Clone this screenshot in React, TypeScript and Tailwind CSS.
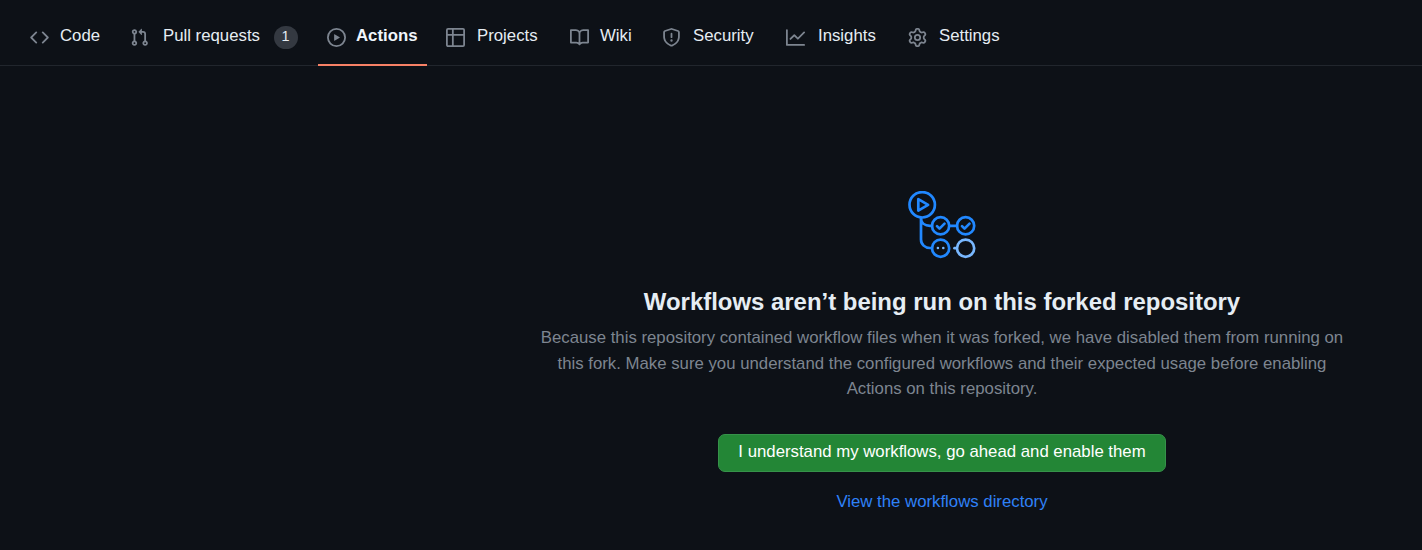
type Tab = { label: string; d: string; item: string; gap: string; badge?: string; active?: boolean };

const tabs: Tab[] = [
  {
    label: 'Code',
    item: 'w-[100px]',
    gap: 'ml-[11px]',
    d: 'M4.72 3.22a.75.75 0 011.06 1.06L2.06 8l3.72 3.72a.75.75 0 11-1.06 1.06L.47 8.53a.75.75 0 010-1.06l4.25-4.25zm6.56 0a.75.75 0 10-1.06 1.06L13.94 8l-3.72 3.72a.75.75 0 101.06 1.06l4.25-4.25a.75.75 0 000-1.06l-4.25-4.25z',
  },
  {
    label: 'Pull requests',
    item: 'w-[197px]',
    gap: 'ml-[14px]',
    badge: '1',
    d: 'M7.177 3.073L9.573.677A.25.25 0 0110 .854v4.792a.25.25 0 01-.427.177L7.177 3.427a.25.25 0 010-.354zM3.75 2.5a.75.75 0 100 1.5.75.75 0 000-1.5zm-2.25.75a2.25 2.25 0 113 2.122v5.256a2.251 2.251 0 11-1.5 0V5.372A2.25 2.25 0 011.5 3.25zM11 2.5h-1V4h1a1 1 0 011 1v5.628a2.251 2.251 0 101.5 0V5A2.5 2.5 0 0011 2.5zm1 10.25a.75.75 0 111.5 0 .75.75 0 01-1.5 0zM3.75 12a.75.75 0 100 1.5.75.75 0 000-1.5z',
  },
  {
    label: 'Actions',
    item: 'w-[119px]',
    gap: 'ml-[10px]',
    active: true,
    d: 'M1.5 8a6.5 6.5 0 1113 0 6.5 6.5 0 01-13 0zM8 0a8 8 0 100 16A8 8 0 008 0zM6.379 5.227A.25.25 0 006 5.442v5.117a.25.25 0 00.379.214l4.264-2.559a.25.25 0 000-.428L6.379 5.227z',
  },
  {
    label: 'Projects',
    item: 'w-[124px]',
    gap: 'ml-[12px]',
    d: 'M1.75 0A1.75 1.75 0 000 1.75v12.5C0 15.216.784 16 1.75 16h12.5A1.75 1.75 0 0016 14.25V1.75A1.75 1.75 0 0014.25 0H1.75zM1.5 1.75a.25.25 0 01.25-.25H5v3.5H1.5V1.75zM6.5 6.5v8h7.75a.25.25 0 00.25-.25V6.5h-8zm8-1.5V1.75a.25.25 0 00-.25-.25H6.5V5h8zm-13 1.5v7.75c0 .138.112.25.25.25H5v-8H1.5z',
  },
  {
    label: 'Wiki',
    item: 'w-[92px]',
    gap: 'ml-[11px]',
    d: 'M0 1.75A.75.75 0 01.75 1h4.253c1.227 0 2.317.59 3 1.501A3.744 3.744 0 0111.006 1h4.245a.75.75 0 01.75.75v10.5a.75.75 0 01-.75.75h-4.507a2.25 2.25 0 00-1.591.659l-.622.621a.75.75 0 01-1.06 0l-.622-.621A2.25 2.25 0 005.258 13H.75a.75.75 0 01-.75-.75V1.75zm8.755 3a2.25 2.25 0 012.25-2.25H14.5v9h-3.757c-.71 0-1.4.201-1.992.572l.004-7.322zm-1.504 7.324l.004-5.073-.002-2.253A2.25 2.25 0 005.003 2.5H1.5v9h3.757a3.75 3.75 0 011.994.574z',
  },
  {
    label: 'Security',
    item: 'w-[124px]',
    gap: 'ml-[12px]',
    d: 'M7.467.133a1.75 1.75 0 011.066 0l5.25 1.68A1.75 1.75 0 0115 3.48V7c0 1.566-.32 3.182-1.303 4.682-.983 1.498-2.585 2.813-5.032 3.855a1.7 1.7 0 01-1.33 0c-2.447-1.042-4.049-2.357-5.032-3.855C1.32 10.182 1 8.566 1 7V3.48a1.75 1.75 0 011.217-1.667l5.25-1.68zm.61 1.429a.25.25 0 00-.153 0l-5.25 1.68a.25.25 0 00-.174.238V7c0 1.358.275 2.666 1.057 3.86.784 1.194 2.121 2.34 4.366 3.297a.2.2 0 00.154 0c2.245-.956 3.582-2.104 4.366-3.298C13.225 9.666 13.5 8.36 13.5 7V3.48a.25.25 0 00-.174-.237l-5.25-1.68zM9 10.5a1 1 0 11-2 0 1 1 0 012 0zm-.25-5.75a.75.75 0 10-1.5 0v3a.75.75 0 001.5 0v-3z',
  },
  {
    label: 'Insights',
    item: 'w-[122px]',
    gap: 'ml-[13px]',
    d: 'M1.5 1.75a.75.75 0 00-1.5 0v12.5c0 .414.336.75.75.75h14.5a.75.75 0 000-1.5H1.5V1.75zm14.28 2.53a.75.75 0 00-1.06-1.06L10 7.94 7.53 5.47a.75.75 0 00-1.06 0L3.22 8.72a.75.75 0 001.06 1.06L7 7.06l2.47 2.47a.75.75 0 001.06 0l5.25-5.25z',
  },
  {
    label: 'Settings',
    item: 'w-[110px]',
    gap: 'ml-[12px]',
    d: 'M7.429 1.525a6.593 6.593 0 011.142 0c.036.003.108.036.137.146l.289 1.105c.147.56.55.967.997 1.189.174.086.341.183.501.29.417.278.97.423 1.53.27l1.102-.303c.11-.03.175.016.195.046.219.31.41.641.573.989.014.031.022.11-.059.19l-.815.806c-.411.406-.562.957-.53 1.456a4.588 4.588 0 010 .582c-.032.499.119 1.05.53 1.456l.815.806c.08.08.073.159.059.19a6.494 6.494 0 01-.573.99c-.02.029-.086.074-.195.045l-1.103-.303c-.559-.153-1.112-.008-1.529.27-.16.107-.327.204-.5.29-.449.222-.851.628-.998 1.189l-.289 1.105c-.029.11-.101.143-.137.146a6.613 6.613 0 01-1.142 0c-.036-.003-.108-.037-.137-.146l-.289-1.105c-.147-.56-.55-.967-.997-1.189a4.502 4.502 0 01-.501-.29c-.417-.278-.97-.423-1.53-.27l-1.102.303c-.11.03-.175-.016-.195-.046a6.492 6.492 0 01-.573-.989c-.014-.031-.022-.11.059-.19l.815-.806c.411-.406.562-.957.53-1.456a4.587 4.587 0 010-.582c.032-.499-.119-1.05-.53-1.456l-.815-.806c-.08-.08-.073-.159-.059-.19a6.44 6.44 0 01.573-.99c.02-.029.086-.075.195-.045l1.103.303c.559.153 1.112.008 1.529-.27.16-.107.327-.204.5-.29.449-.222.851-.628.998-1.189l.289-1.105c.029-.11.101-.143.137-.146zM8 0c-.236 0-.47.01-.701.03-.743.065-1.29.615-1.458 1.261l-.29 1.106c-.017.066-.078.158-.211.224a5.994 5.994 0 00-.668.386c-.123.082-.233.09-.3.071L3.27 2.776c-.644-.177-1.392.02-1.82.63a7.977 7.977 0 00-.704 1.217c-.315.675-.111 1.422.363 1.891l.815.806c.05.048.098.147.088.294a6.084 6.084 0 000 .772c.01.147-.038.246-.088.294l-.815.806c-.474.469-.678 1.216-.363 1.891.2.428.436.835.704 1.218.428.609 1.176.806 1.82.63l1.103-.303c.066-.019.176-.011.299.071.213.143.436.272.668.386.133.066.194.158.212.224l.289 1.106c.169.646.715 1.196 1.458 1.26a8.094 8.094 0 001.402 0c.743-.064 1.29-.614 1.458-1.26l.29-1.106c.017-.066.078-.158.211-.224a5.98 5.98 0 00.668-.386c.123-.082.233-.09.3-.071l1.102.302c.644.177 1.392-.02 1.82-.63.268-.382.505-.789.704-1.217.315-.675.111-1.422-.364-1.891l-.814-.806c-.05-.048-.098-.147-.088-.294a6.1 6.1 0 000-.772c-.01-.147.039-.246.088-.294l.814-.806c.475-.469.679-1.216.364-1.891a7.992 7.992 0 00-.704-1.218c-.428-.609-1.176-.806-1.82-.63l-1.103.303c-.066.019-.176.011-.299-.071a5.991 5.991 0 00-.668-.386c-.133-.066-.194-.158-.212-.224L10.16 1.29C9.99.645 9.444.095 8.701.031A8.094 8.094 0 008 0zM8 5a3 3 0 100 6 3 3 0 000-6zm0 1.5a1.5 1.5 0 110 3 1.5 1.5 0 010-3z',
  },
];

function TabLink({ tab }: { tab: Tab }) {
  return (
    <a className={`relative flex h-full shrink-0 items-start whitespace-nowrap ${tab.item}`}>
      <svg viewBox="0 0 16 16" className="mt-[28px] h-[19px] w-[19px] shrink-0 fill-[#7d8590]">
        <path fillRule="evenodd" d={tab.d} />
      </svg>
      <span className={`mt-[23px] leading-[25px] ${tab.gap} ${tab.active ? 'font-bold text-[#f0f6fc]' : ''}`}>
        {tab.label}
      </span>
      {tab.badge && (
        <span className="mt-[26px] ml-[14px] h-[23px] w-6 rounded-full bg-[#343941] pr-px text-center text-[14.4px] leading-[21px]">
          {tab.badge}
        </span>
      )}
      {tab.active && <span className="absolute -bottom-px -left-[9px] h-0.5 w-[109px] bg-[#f78166]" />}
    </a>
  );
}

function WorkflowArt() {
  return (
    <svg viewBox="0 0 68 68" className="h-[68px] w-[68px]" fill="none" stroke="#2188ff" strokeWidth="2.7" strokeLinecap="round" strokeLinejoin="round">
      <circle cx="14.2" cy="13.8" r="12.7" />
      <path d="M10.3 8.2v11.4l9.8-5.700z" />
      <path d="M13 27v21.500c0 5 4 8.500 9 8.500h2M13 27c0 5 4 7.800 9 7.800h2M42 34.800h7" />
      <circle cx="32.600" cy="34.800" r="8.600" />
      <circle cx="57.600" cy="34.800" r="8.600" />
      <path d="M29 35.100l2.500 2.500 5-5M54 35.100l2.500 2.500 5-5" />
      <circle cx="32.600" cy="57.200" r="8.600" />
      <g stroke="#79b8ff">
        <circle cx="57.600" cy="57.200" r="8.600" />
        <path d="M46.500 57.200h2" />
      </g>
      <circle cx="29.900" cy="57" r="1.300" fill="#79b8ff" stroke="none" />
      <circle cx="35.300" cy="57" r="1.300" fill="#79b8ff" stroke="none" />
    </svg>
  );
}

export default function App() {
  return (
    <div className="flex h-[550px] w-[1422px] flex-col overflow-hidden bg-[#0d1117] font-['Liberation_Sans',Arial,sans-serif] text-[16.77px] text-[#e6edf3]">
      <nav className="flex h-[66px] shrink-0 border-b border-[#21262d] pl-[30px]">
        {tabs.map((tab) => (
          <TabLink key={tab.label} tab={tab} />
        ))}
      </nav>
      <main className="flex flex-1 flex-col items-center pt-[125px] pl-[462px] text-center">
        <WorkflowArt />
        <h1 className="mt-[25px] text-[23.93px] leading-9 font-bold whitespace-nowrap">Workflows aren’t being run on this forked repository</h1>
        <p className="mt-[5px] leading-[25.500px] whitespace-nowrap text-[#7d8590]">
          Because this repository contained workflow files when it was forked, we have disabled them from running on
          <br />
          this fork. Make sure you understand the configured workflows and their expected usage before enabling
          <br />
          Actions on this repository.
        </p>
        <button className="mt-[32px] h-[38px] w-[448px] shrink-0 rounded-[7px] border border-[#36924a] bg-[#238636] pb-px whitespace-nowrap text-white">
          I understand my workflows, go ahead and enable them
        </button>
        <a className="mt-[17px] leading-[25px] text-[#2f81f7]">View the workflows directory</a>
      </main>
    </div>
  );
}
